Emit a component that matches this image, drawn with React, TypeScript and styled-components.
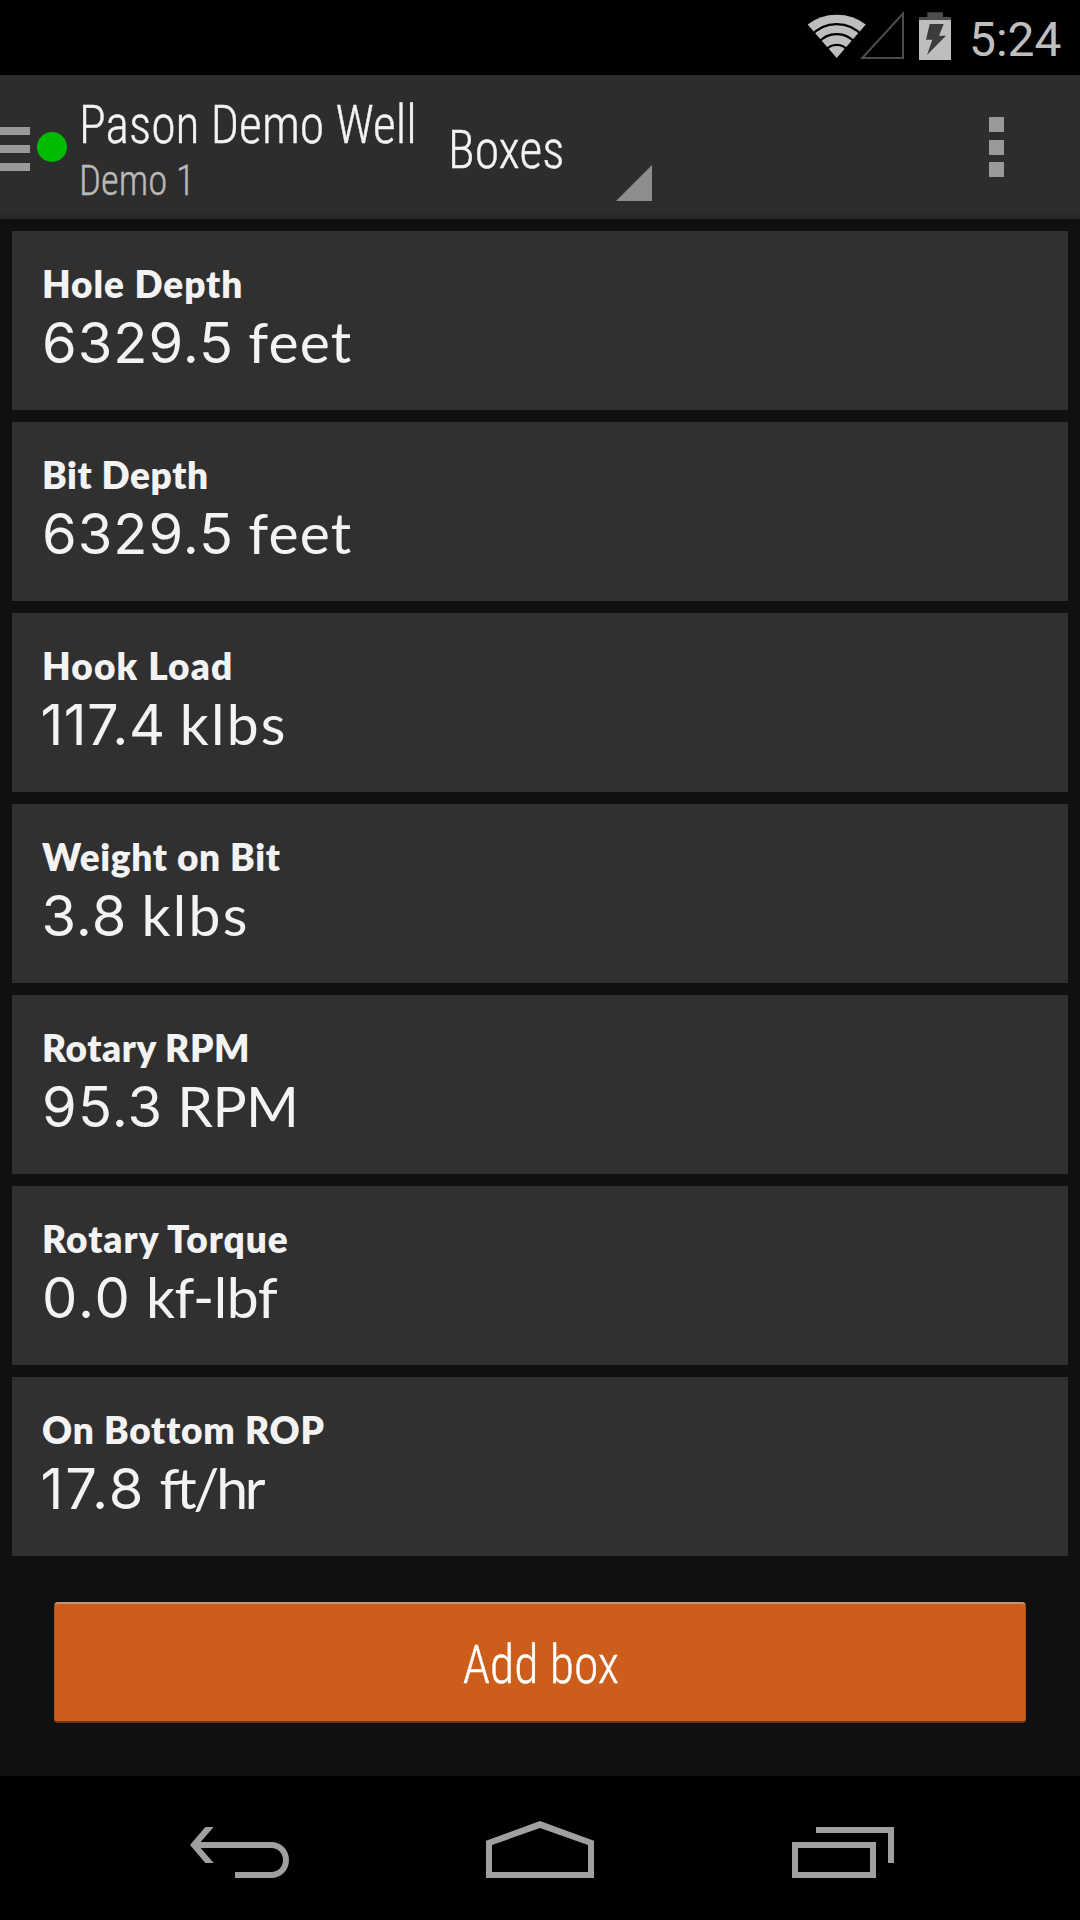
import React from 'react';
import styled, { createGlobalStyle } from 'styled-components';

const GlobalStyle = createGlobalStyle`
  * { box-sizing: border-box; }
  body { margin: 0; background: #101010; color: #f3f3f3; font-family: Roboto, sans-serif; }
  svg { display: block; flex: none; }
`;

const Screen = styled.div`
  width: 1080px;
  height: 1920px;
  display: flex;
  flex-direction: column;
  background: #101010;
  overflow: hidden;
`;

const StatusBar = styled.div`
  height: 75px;
  flex: none;
  display: flex;
  align-items: flex-start;
  justify-content: flex-end;
  padding: 11px 15px 0 0;
  background: #000;
`;

const Clock = styled.span`
  width: 96px;
  margin: 1px 0 0 18px;
  color: #bebebe;
  font-size: 48px;
  line-height: 56px;
  white-space: nowrap;
`;

const ActionBar = styled.header`
  height: 144px;
  flex: none;
  display: flex;
  align-items: flex-start;
  background: #2d2d2d;
  border-bottom: 6px solid #282828;
`;

const DrawerIcon = styled.div`
  width: 30px;
  margin-top: 52px;
  display: flex;
  flex-direction: column;
  gap: 10px;
`;

const DrawerLine = styled.span`
  height: 8px;
  background: #999;
`;

const StatusDot = styled.span`
  width: 30px;
  height: 30px;
  margin: 57px 0 0 7px;
  border-radius: 50%;
  background: #00bb00;
`;

const TitleColumn = styled.div`
  width: 369px;
  margin: 20px 0 0 12px;
`;

const Condensed = styled.div<{ $origin?: string }>`
  font-family: "Roboto Condensed", Roboto, sans-serif;
  font-weight: 300;
  font-stretch: 75%;
  font-size: 54px;
  line-height: 60px;
  white-space: nowrap;
  -webkit-text-stroke: 0.4px currentColor;
  transform: scaleX(0.921);
  transform-origin: ${p => p.$origin ?? 'left'} center;
`;

const Subtitle = styled(Condensed)`
  margin-top: 1px;
  font-size: 42px;
  line-height: 50px;
  color: #b9b9b9;
`;

const Spinner = styled.div`
  display: flex;
  width: 204px;
  height: 126px;
  align-items: flex-end;
  justify-content: space-between;
`;

const SpinnerLabel = styled(Condensed)`
  align-self: flex-start;
  width: 130px;
  margin-top: 45px;
`;

const Overflow = styled.div`
  margin: 42px 76px 0 auto;
  display: grid;
  grid-template-rows: 15px 15px 15px;
  row-gap: 7.5px;
`;

const OverflowDot = styled.span`
  width: 15px;
  background: #999;
`;

const BoxList = styled.main`
  flex: 1;
  display: flex;
  flex-direction: column;
  gap: 12px;
  padding: 12px 12px 0;
`;

const Box = styled.section`
  height: 179px;
  flex: none;
  padding: 31px 30px 0;
  background: #303030;
`;

const BoxLabel = styled.div<{ $tracking: number }>`
  font-family: Lato, sans-serif;
  font-size: 37px;
  font-weight: 800;
  line-height: 44px;
  letter-spacing: ${p => p.$tracking}px;
`;

const BoxValue = styled.div<{ $pull?: number }>`
  margin: 3px 0 0 -${p => p.$pull ?? 0}px;
  font-family: Inter, sans-serif;
  font-size: 50px;
  line-height: 64px;
  white-space: nowrap;
`;

const Amount = styled.span<{ $tracking: number }>`
  font-size: 56px;
  letter-spacing: ${p => p.$tracking}px;
`;

const Unit = styled.span<{ $tracking: number }>`
  font-family: Lato, sans-serif;
  font-size: 57px;
  letter-spacing: ${p => p.$tracking}px;
`;

const AddButton = styled.button`
  width: 972px;
  height: 121px;
  flex: none;
  margin: 34px 42px 0;
  padding: 4px 0 0 1px;
  display: flex;
  align-items: center;
  justify-content: center;
  color: #fff;
  background: #cd5d1a;
  border: solid;
  border-width: 2px 1px;
  border-color: #c9936f #a2511f #6a3717 #a2511f;
  border-radius: 4px;
`;

const NavBar = styled.nav`
  height: 144px;
  flex: none;
  display: flex;
  align-items: flex-end;
  padding: 0 0 42px 190px;
  gap: 197px;
  background: #000;
`;

type Reading = {
  label: string; amount: string; unit: string;
  labelTracking: number; amountTracking: number; unitTracking: number; pull?: number;
};

const readings: Reading[] = [
  { label: 'Hole Depth', amount: '6329.5', unit: 'feet', labelTracking: 0.93, amountTracking: 1, unitTracking: 1.2 },
  { label: 'Bit Depth', amount: '6329.5', unit: 'feet', labelTracking: 0.6, amountTracking: 1, unitTracking: 1.2 },
  { label: 'Hook Load', amount: '117.4', unit: 'klbs', labelTracking: 1.15, amountTracking: 0.5, unitTracking: 2.3, pull: 1.5 },
  { label: 'Weight on Bit', amount: '3.8', unit: 'klbs', labelTracking: 0.67, amountTracking: 1, unitTracking: 2.3, pull: 0.5 },
  { label: 'Rotary RPM', amount: '95.3', unit: 'RPM', labelTracking: 0.55, amountTracking: 1.2, unitTracking: -0.6 },
  { label: 'Rotary Torque', amount: '0.0', unit: 'kf-lbf', labelTracking: 1, amountTracking: 2, unitTracking: -0.5 },
  { label: 'On Bottom ROP', amount: '17.8', unit: 'ft/hr', labelTracking: 0.8, amountTracking: 2, unitTracking: -3.2, pull: 1.5 },
];

const StatusIcons = () => (
  <svg width="144" height="50" viewBox="807 11 144 50">
    <path d="M836.7 58 L807.6 24.5 Q820 14.7 836.7 14.7 T865.8 24.5Z" fill="#bebebe" />
    <g fill="none" stroke="#000" strokeWidth="2.3">
      <path d="M811 35.8 A34 34 0 0 1 862.4 35.8" />
      <path d="M818 43 A24 24 0 0 1 855.4 43" />
      <path d="M825.5 50.5 A14 14 0 0 1 847.9 50.5" />
    </g>
    <path d="M862.3 58 L903 13.6 V58Z" fill="none" stroke="#4c4c4c" strokeWidth="2" />
    <path d="M927.3 12.3H943V17H951V20H919V17H927.3Z" fill="#4c4c4c" />
    <path d="M919 20H951V60H919Z" fill="#bebebe" />
    <path d="M929.7 24H943.7L939 35.7H946L927 55L932.3 39.7H926Z" fill="#3c3c3c" />
  </svg>
);

const BackIcon = () => (
  <svg width="99" height="51" viewBox="90 171 297 153" fill="#a0a0a0">
    <path d="M90 225L136 171H161L122 216H333C365 216 387 240 387 270S365 324 333 324H225V306H333C355 306 369 290 369 270S355 234 333 234H122L161 279H136Z" />
  </svg>
);

const HomeIcon = () => (
  <svg width="108" height="57" viewBox="978 153 324 171" fill="#a0a0a0">
    <path fillRule="evenodd" d="M978 212L1140 153L1302 212V324H978ZM996 225V306H1284V225L1140 174Z" />
  </svg>
);

const RecentsIcon = () => (
  <svg width="103" height="51" viewBox="93 171 309 153" fill="#a0a0a0">
    <path fillRule="evenodd" d="M96 216H348V324H96ZM114 234V306H330V234ZM168 171H402V279H384V189H168Z" />
  </svg>
);

export default function App() {
  return (
    <Screen>
      <GlobalStyle />
      <StatusBar>
        <StatusIcons />
        <Clock>5:24</Clock>
      </StatusBar>
      <ActionBar>
        <DrawerIcon><DrawerLine /><DrawerLine /><DrawerLine /></DrawerIcon>
        <StatusDot />
        <TitleColumn>
          <Condensed>Pason Demo Well</Condensed>
          <Subtitle>Demo 1</Subtitle>
        </TitleColumn>
        <Spinner>
          <SpinnerLabel>Boxes</SpinnerLabel>
          <svg width="36" height="36" viewBox="0 0 36 36"><path d="M0 36L36 0V36Z" fill="#8d8d8d" /></svg>
        </Spinner>
        <Overflow><OverflowDot /><OverflowDot /><OverflowDot /></Overflow>
      </ActionBar>
      <BoxList>
        {readings.map(r => (
          <Box key={r.label}>
            <BoxLabel $tracking={r.labelTracking}>{r.label}</BoxLabel>
            <BoxValue $pull={r.pull}>
              <Amount $tracking={r.amountTracking}>{r.amount}</Amount>{' '}
              <Unit $tracking={r.unitTracking}>{r.unit}</Unit>
            </BoxValue>
          </Box>
        ))}
        <AddButton><Condensed as="span" $origin="center">Add box</Condensed></AddButton>
      </BoxList>
      <NavBar><BackIcon /><HomeIcon /><RecentsIcon /></NavBar>
    </Screen>
  );
}
